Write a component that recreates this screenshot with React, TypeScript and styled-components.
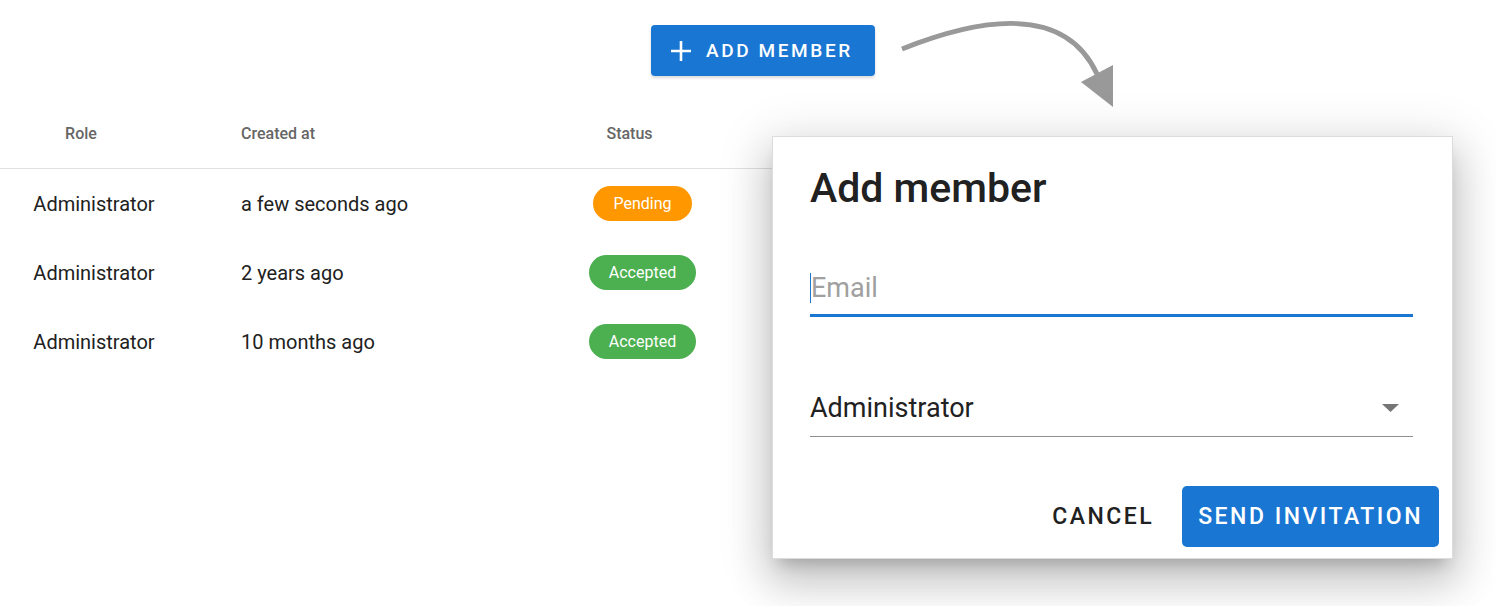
import React from "react"
import styled, { createGlobalStyle } from "styled-components"

const GlobalStyle = createGlobalStyle`
  html, body {
    margin: 0;
    padding: 0;
    background: #fff;
    font-family: Roboto, "Liberation Sans", sans-serif;
    color: #212121;
  }
`

const Page = styled.div`
  position: relative;
  width: 1496px;
  height: 606px;
  overflow: hidden;
`

const Toolbar = styled.div`
  height: 98px;
  box-sizing: border-box;
  padding: 25px 0 0 651px;
`

const AddButton = styled.button`
  display: flex;
  align-items: center;
  gap: 14px;
  height: 51px;
  padding: 0 22px 0 19px;
  border: none;
  border-radius: 4px;
  background: #1976d2;
  color: #fff;
  font-family: Roboto, sans-serif;
  font-size: 19px;
  font-weight: 500;
  letter-spacing: 2.6px;
  box-shadow: 0 2px 3px rgba(0, 0, 0, 0.15);
`

const Table = styled.div`
  width: 790px;
  display: grid;
  grid-template-columns: 188px 342px 225px 35px;
`

const HeadCell = styled.div<{ $align?: string }>`
  height: 70px;
  display: flex;
  align-items: center;
  justify-content: ${(p) => p.$align || "flex-start"};
  padding-left: ${(p) => (p.$align === "center" ? "0" : "53px")};
  border-bottom: 1px solid #e0e0e0;
  font-size: 16px;
  font-weight: 500;
  color: #666;
`

const SortSpace = styled.span`
  display: inline-block;
  width: 26px;
`

const Cell = styled.div<{ $align?: string }>`
  height: 69px;
  display: flex;
  align-items: center;
  justify-content: ${(p) => p.$align || "flex-start"};
  padding-left: ${(p) => (p.$align === "center" ? "0" : "53px")};
  font-size: 20px;
  color: #212121;
`

const Chip = styled.span<{ $color: string }>`
  display: inline-flex;
  align-items: center;
  height: 35px;
  padding: 0 20px;
  border-radius: 18px;
  background: ${(p) => p.$color};
  color: #fff;
  font-size: 16px;
`

const Dialog = styled.div`
  position: absolute;
  left: 772px;
  top: 136px;
  width: 681px;
  height: 423px;
  box-sizing: border-box;
  padding: 24px 13px 11px 37px;
  display: flex;
  flex-direction: column;
  background: #fff;
  border: 1px solid #dcdcdc;
  box-shadow: 0 11px 15px -7px rgba(0, 0, 0, 0.2),
    0 24px 38px 3px rgba(0, 0, 0, 0.14), 0 9px 46px 8px rgba(0, 0, 0, 0.12);
`

const Title = styled.h2`
  margin: 0;
  font-size: 41px;
  font-weight: 500;
  line-height: 54px;
  color: #212121;
`

const Field = styled.div<{ $focused?: boolean }>`
  width: 603px;
  margin-top: ${(p) => (p.$focused ? "53px" : "71px")};
  display: flex;
  align-items: center;
  height: 40px;
  padding-bottom: ${(p) => (p.$focused ? "6px" : "8px")};
  border-bottom: ${(p) => (p.$focused ? "3px solid #1976d2" : "1px solid #8f8f8f")};
  font-size: 27px;
`

const Caret = styled.span`
  width: 1px;
  height: 30px;
  background: #1976d2;
`

const Placeholder = styled.span`
  color: #a0a0a0;
`

const SelectValue = styled.span`
  flex: 1;
  color: #212121;
`

const Actions = styled.div`
  margin-top: auto;
  display: flex;
  justify-content: flex-end;
  align-items: center;
  gap: 12px;
`

const TextButton = styled.button`
  height: 61px;
  padding: 0 16px;
  border: none;
  background: none;
  color: #212121;
  font-family: Roboto, sans-serif;
  font-size: 23px;
  font-weight: 500;
  letter-spacing: 2.5px;
`

const PrimaryButton = styled(TextButton)`
  background: #1976d2;
  color: #fff;
  border-radius: 5px;
  padding: 0 16px;
`

const ArrowSvg = styled.svg`
  position: absolute;
  left: 890px;
  top: 10px;
`

const rows = [
  { when: "a few seconds ago", status: "Pending" },
  { when: "2 years ago", status: "Accepted" },
  { when: "10 months ago", status: "Accepted" },
]

export default function App() {
  return (
    <Page>
      <GlobalStyle />
      <Toolbar>
        <AddButton>
          <svg width="22" height="22" viewBox="0 0 22 22">
            <path d="M11 1v20M1 11h20" stroke="#fff" strokeWidth="2.6" />
          </svg>
          ADD MEMBER
        </AddButton>
      </Toolbar>

      <Table>
        <HeadCell $align="center">
          Role
          <SortSpace />
        </HeadCell>
        <HeadCell>Created at</HeadCell>
        <HeadCell $align="center">
          Status
          <SortSpace />
        </HeadCell>
        <HeadCell $align="center" />
        {rows.map((r, i) => (
          <React.Fragment key={i}>
            <Cell $align="center">Administrator</Cell>
            <Cell>{r.when}</Cell>
            <Cell $align="center">
              <Chip $color={r.status === "Pending" ? "#ff9800" : "#4caf50"}>
                {r.status}
              </Chip>
            </Cell>
            <Cell $align="center" />
          </React.Fragment>
        ))}
      </Table>

      <ArrowSvg width="240" height="110" viewBox="890 10 240 110">
        <path
          d="M902 49 C 980 18, 1065 4, 1097 74"
          fill="none"
          stroke="#999"
          strokeWidth="5"
        />
        <polygon points="1081,82 1113,65 1113,107" fill="#999" />
      </ArrowSvg>

      <Dialog>
        <Title>Add member</Title>
        <Field $focused>
          <Caret />
          <Placeholder>Email</Placeholder>
        </Field>
        <Field>
          <SelectValue>Administrator</SelectValue>
          <svg width="45" height="20" viewBox="0 0 45 20">
            <path d="M14 6h17l-8.5 8z" fill="#757575" />
          </svg>
        </Field>
        <Actions>
          <TextButton>CANCEL</TextButton>
          <PrimaryButton>SEND INVITATION</PrimaryButton>
        </Actions>
      </Dialog>
    </Page>
  )
}
